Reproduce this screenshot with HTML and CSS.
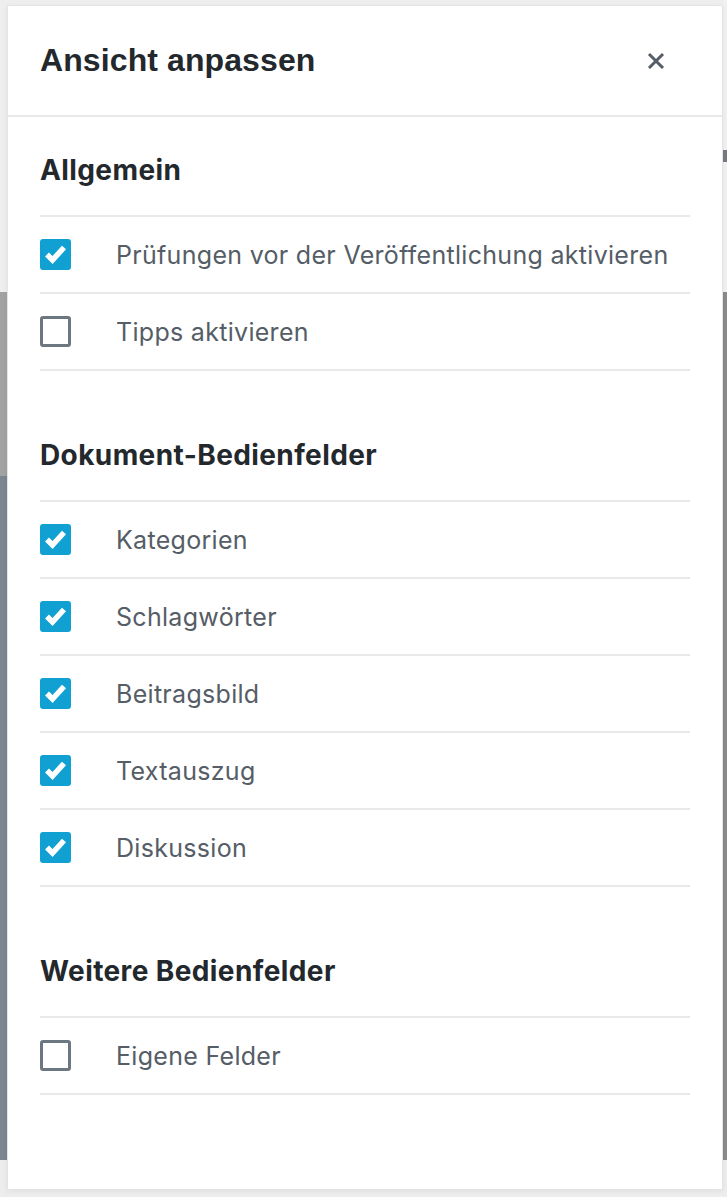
FILE: index.html
```html
<!DOCTYPE html>
<html lang="de">
<head>
<meta charset="utf-8">
<title>Ansicht anpassen</title>
<link rel="stylesheet" href="styles.css">
</head>
<body>
<div class="modal" role="dialog" aria-labelledby="modal-title">
  <header class="modal-header">
    <h1 id="modal-title" class="modal-title">Ansicht anpassen</h1>
    <button class="close" aria-label="Schließen">
      <svg viewBox="0 0 20 20" width="20" height="20"><path d="M3 3 L17 17 M17 3 L3 17" stroke="#555d66" stroke-width="3" fill="none"/></svg>
    </button>
  </header>

  <section class="section first">
    <h2 class="section-title">Allgemein</h2>
    <ul class="options">
      <li class="option"><span class="box checked"><svg viewBox="0 0 31 31"><polyline points="7,15.5 12.5,21 24,8.5" /></svg></span><span class="label">Prüfungen vor der Veröffentlichung aktivieren</span></li>
      <li class="option"><span class="box"></span><span class="label">Tipps aktivieren</span></li>
    </ul>
  </section>

  <section class="section">
    <h2 class="section-title">Dokument-Bedienfelder</h2>
    <ul class="options">
      <li class="option"><span class="box checked"><svg viewBox="0 0 31 31"><polyline points="7,15.5 12.5,21 24,8.5" /></svg></span><span class="label">Kategorien</span></li>
      <li class="option"><span class="box checked"><svg viewBox="0 0 31 31"><polyline points="7,15.5 12.5,21 24,8.5" /></svg></span><span class="label">Schlagwörter</span></li>
      <li class="option"><span class="box checked"><svg viewBox="0 0 31 31"><polyline points="7,15.5 12.5,21 24,8.5" /></svg></span><span class="label">Beitragsbild</span></li>
      <li class="option"><span class="box checked"><svg viewBox="0 0 31 31"><polyline points="7,15.5 12.5,21 24,8.5" /></svg></span><span class="label">Textauszug</span></li>
      <li class="option"><span class="box checked"><svg viewBox="0 0 31 31"><polyline points="7,15.5 12.5,21 24,8.5" /></svg></span><span class="label">Diskussion</span></li>
    </ul>
  </section>

  <section class="section">
    <h2 class="section-title">Weitere Bedienfelder</h2>
    <ul class="options">
      <li class="option"><span class="box"></span><span class="label">Eigene Felder</span></li>
    </ul>
  </section>
</div>
</body>
</html>
```

FILE: styles.css
```css
html, body {
  margin: 0;
  padding: 0;
}

body {
  width: 727px;
  height: 1197px;
  overflow: hidden;
  background:
    linear-gradient(to bottom, #eeeeee 0 292px, #a2a2a2 292px 476px, #7c8690 476px 1160px, #ededed 1160px) left top / 8px 100% no-repeat,
    linear-gradient(to bottom, #f1f1f1 0 150px, #777a7e 150px 162px, #f1f1f1 162px 292px, #8b8b8b 292px 1160px, #ededed 1160px) right top / 4px 100% no-repeat,
    #eeeeee;
  padding-top: 5px;
  box-sizing: border-box;
}

.modal {
  margin-left: 7px;
  width: 716px;
  height: 1185px;
  box-sizing: border-box;
  background: #ffffff;
  border: 1px solid #e2e4e7;
  box-shadow: 0 2px 6px rgba(0, 0, 0, 0.06);
}

.modal-header {
  height: 111px;
  box-sizing: border-box;
  border-bottom: 2px solid #e8e9eb;
  padding: 0 32px;
  display: flex;
  align-items: center;
  justify-content: space-between;
}

.modal-title {
  margin: 0;
  font-family: "Liberation Sans", Arial, sans-serif;
  font-weight: 700;
  font-size: 32px;
  color: #23282d;
  letter-spacing: 0.1px;
}

.close {
  border: 0;
  background: none;
  padding: 0;
  margin-right: 24px;
  width: 20px;
  height: 20px;
  display: flex;
}

.section {
  padding: 0 32px;
  margin-top: 66px;
}

.section.first {
  margin-top: 35px;
}

.section-title {
  margin: 0 0 27px;
  font-family: Inter, "Noto Sans", sans-serif;
  font-weight: 700;
  font-size: 28px;
  letter-spacing: 0.4px;
  line-height: 36px;
  color: #23282d;
}

.options {
  list-style: none;
  margin: 0;
  padding: 0;
  border-bottom: 2px solid #e8e9eb;
}

.option {
  height: 75px;
  border-top: 2px solid #e8e9eb;
  display: flex;
  align-items: center;
  gap: 45px;
}

.box {
  width: 31px;
  height: 31px;
  box-sizing: border-box;
  border: 3px solid #6c7781;
  border-radius: 3px;
  flex: none;
}

.box.checked {
  border: 0;
  background: #11a0d2;
  border-radius: 3px;
}

.box svg {
  display: block;
  width: 31px;
  height: 31px;
}

.box svg polyline {
  fill: none;
  stroke: #ffffff;
  stroke-width: 5.5;
  stroke-linejoin: miter;
  stroke-linecap: butt;
}

.label {
  font-family: Inter, "Noto Sans", sans-serif;
  font-size: 25px;
  letter-spacing: 0.3px;
  color: #555d66;
}
```
